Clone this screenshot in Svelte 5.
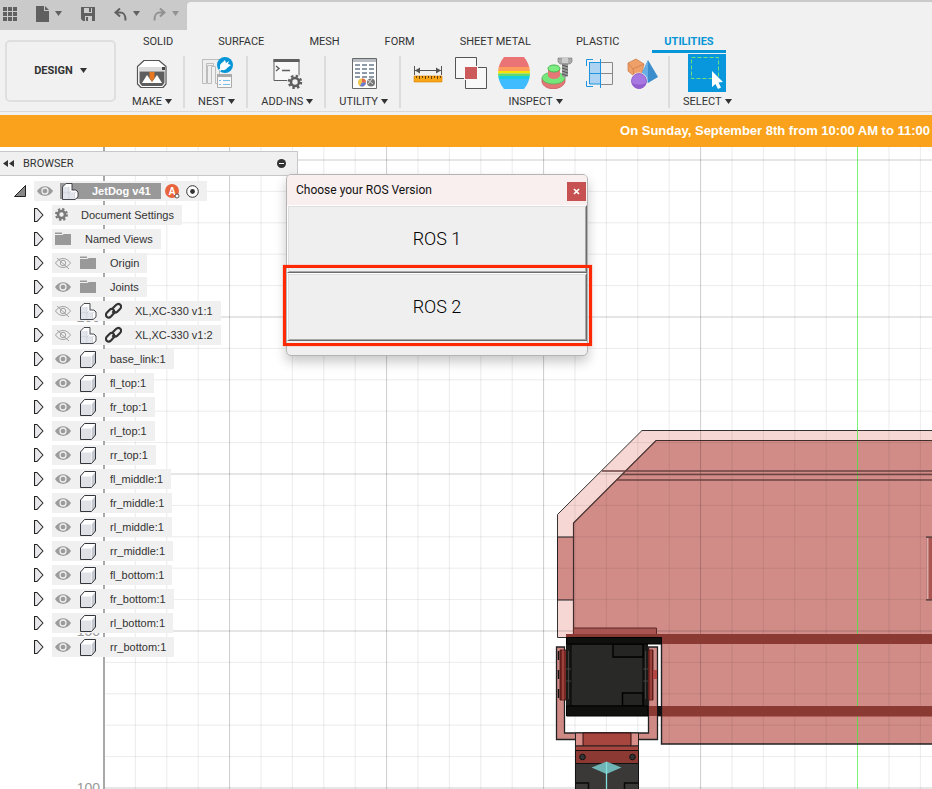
<script>
  const tabs = ['SOLID', 'SURFACE', 'MESH', 'FORM', 'SHEET METAL', 'PLASTIC', 'UTILITIES'];
  let activeTab = $state('UTILITIES');

  const groups = [
    { label: 'MAKE', icons: ['make'] },
    { label: 'NEST', icons: ['nest'] },
    { label: 'ADD-INS', icons: ['addins'] },
    { label: 'UTILITY', icons: ['utility'] },
    { label: 'INSPECT', icons: ['measure', 'interference', 'curvature', 'section', 'center', 'display'] },
    { label: 'SELECT', icons: ['select'] }
  ];

  const tree = [
    { name: 'Document Settings', icons: ['gear'] },
    { name: 'Named Views', icons: ['folder'] },
    { name: 'Origin', icons: ['hidden', 'folder'] },
    { name: 'Joints', icons: ['eye', 'folder'] },
    { name: 'XL,XC-330 v1:1', icons: ['hidden', 'component', 'link'] },
    { name: 'XL,XC-330 v1:2', icons: ['hidden', 'component', 'link'] },
    ...[
      'base_link', 'fl_top', 'fr_top', 'rl_top', 'rr_top',
      'fl_middle', 'fr_middle', 'rl_middle', 'rr_middle',
      'fl_bottom', 'fr_bottom', 'rl_bottom', 'rr_bottom'
    ].map((n) => ({ name: n + ':1', icons: ['eye', 'body'] }))
  ];

  // Every fifth line is a major one; column 23 is left to the green axis.
  const step = 31.4;
  const columns = Array.from({ length: 72 }, (_, i) => ({ i, x: 135.4 + i * step, major: i % 5 === 3 })).filter((c) => c.i !== 23);
  const rows = Array.from({ length: 60 }, (_, i) => ({ y: 13 + i * step, major: i % 5 === 0 }));
  const marks = [250, 200, 150, 100].map((value, i) => ({ value, y: 175 + i * 157 }));
</script>

{#snippet caret()}
  <svg class="caret" width="7" height="5" viewBox="0 0 7 5" aria-hidden="true"><path d="M0 0h7L3.5 5z" fill="currentColor" /></svg>
{/snippet}

{#snippet toolIcon(name)}
  {#if name === 'make'}
    <svg width="32" height="32" viewBox="0 0 32 32">
      <path d="M1.500 9.500 8 3.500h15l7 6V27l-3 3.500H5L1.500 27z" fill="#fff" stroke="#555" stroke-width="1.200" stroke-linejoin="round" />
      <path d="M3 10h26v4.500H3z" fill="#dadada" />
      <path d="M26 10h3v3h-3z" fill="#444" />
      <path d="M3.500 14.500h25V26l-2.500 3H6l-2.500-3z" fill="#5e5e5e" />
      <path d="M6 26 11 18l5 7 5-7 5 8z" fill="#fff" />
      <path d="M13.500 15h5v6L16 24.500 13.500 21z" fill="#e87722" />
    </svg>
  {:else if name === 'nest'}
    <svg width="32" height="32" viewBox="0 0 32 32">
      <path d="M1.500 26.500v-24h17v24h-4v-17h-4v17h-4v-18h6v-2h-7v20z" fill="#eee" stroke="#bdbdbd" />
      <circle cx="24" cy="8" r="8" fill="#0696d7" />
      <path d="m18.500 13.500 2-2" stroke="#fff" stroke-width="1.800" />
      <path d="M20 12.500c-2-3-1-6 2-7.500l4 6c-1 2-4 3-6 1.500zM22 5l2-2 1 3 3-2-1 3 3 1-4 3z" fill="#fff" />
      <path d="M16.500 17.500h14v13h-14z" fill="#f8f8f8" stroke="#aaa" />
      <path d="M16 17h15v3H16z" fill="#aaa" />
      <path d="M18 23.500h2m2 0h7M18 27.500h2m2 0h7" stroke="#7bbce4" />
    </svg>
  {:else if name === 'addins'}
    <svg width="32" height="32" viewBox="0 0 32 32">
      <path d="M3 2.500h25v21H3z" fill="#f8f8f8" stroke="#5e5e5e" />
      <path d="M2.500 2h26v3h-26z" fill="#5e5e5e" />
      <path d="m5 9 3 2.500-3 2.500M11 13.500h8" fill="none" stroke="#5e5e5e" stroke-width="1.4" />
      <circle cx="24" cy="25" r="8" fill="#f1f1f1" />
      <circle cx="24" cy="25" r="4" fill="none" stroke="#5e5e5e" stroke-width="2.600" />
      <circle cx="24" cy="25" r="6" fill="none" stroke="#5e5e5e" stroke-width="2.400" stroke-dasharray="2.400 2.312" />
    </svg>
  {:else if name === 'utility'}
    <svg width="32" height="32" viewBox="0 0 32 32">
      <path d="M4.500 1.500h24v30h-24z" fill="#fff" stroke="#6a6a6a" />
      <path d="M5 2h23v3H5z" fill="#b9bec5" />
      <path d="M7 8h5m2 0h5m2 0h5M7 12h5m2 0h5m2 0h5M7 16h5m2 0h5m2 0h5M7 20h5m2 0h5m2 0h5" stroke="#8e99aa" stroke-width="2" />
      <circle cx="14" cy="25.500" r="4" fill="#f1c84b" />
      <path d="M14 25.500v-4a4 4 0 0 1 4 4z" fill="#e5694f" />
      <path d="M14 25.500h4a4 4 0 0 1-6 3.400z" fill="#6a79d8" />
      <circle cx="23" cy="25.500" r="4" fill="#777" />
      <path d="m20 23 5 4m-5 0 4-5" stroke="#ddd" />
    </svg>
  {:else if name === 'measure'}
    <svg width="32" height="32" viewBox="0 0 32 32">
      <path d="M2.500 9v9M29.500 9v9M3 13.500h26" stroke="#555" />
      <path d="m3 13.500 5-3v6zm26 0-5-3v6z" fill="#555" />
      <path d="M2 19h28v6H2z" fill="#f9a51a" stroke="#d88400" stroke-width=".6" />
      <path d="M4.500 19v2m3-2v3m3-3v2m3-2v3m3-3v2m3-2v3m3-3v2m3-2v3m3-3v2" stroke="#684200" />
    </svg>
  {:else if name === 'interference'}
    <svg width="32" height="32" viewBox="0 0 32 32">
      <path d="M.5.500h21v21H.500zM10.500 10.500h21v21h-21z" fill="#f8f8f8" stroke="#555" />
      <path d="M9 9h14v14H9z" fill="#f8f8f8" />
      <path d="M10 10h12v12H10z" fill="#cd5a5a" />
    </svg>
  {:else if name === 'curvature'}
    <svg width="32" height="32" viewBox="0 0 32 32">
      <clipPath id="barrel"><path d="M6 0h20c8 10 8 22 0 32H6C-2 22-2 10 6 0z" /></clipPath>
      <g clip-path="url(#barrel)">
        <path d="M0 0h32v11H0z" fill="#ea7375" /><path d="M0 10h32v4H0z" fill="#ff9d5c" />
        <path d="M0 14h32v2.500H0z" fill="#f3e500" /><path d="M0 16.500h32v2.500H0z" fill="#63d96d" />
        <path d="M0 19h32v4H0z" fill="#15cee0" /><path d="M0 22h32v10H0z" fill="#3fbcff" />
      </g>
    </svg>
  {:else if name === 'section'}
    <svg width="32" height="32" viewBox="0 0 32 32">
      <path d="M1 21v4c2 9 20 9 23 0v-4z" fill="#e57777" stroke="#bd5050" stroke-width=".7" />
      <ellipse cx="12.500" cy="21" rx="11.500" ry="6" fill="#76e77b" stroke="#4cb852" stroke-width=".7" />
      <path d="M7 11v8c2 4 10 4 12 0v-8z" fill="#e57777" />
      <ellipse cx="13" cy="11.500" rx="6" ry="3.500" fill="#7dec82" stroke="#43b84b" />
      <path d="M21 5h6v13l-3 3-3-2z" fill="#989898" />
      <path d="m21 8 6 2m-6 1 6 2m-6 1 6 2m-6 1 6 2" stroke="#555" />
      <path d="M17 1h14v4l-2 2H19l-2-2z" fill="#aaa" stroke="#777" stroke-width=".6" /><path d="M21 1h6v5h-6z" fill="#ccc" />
    </svg>
  {:else if name === 'center'}
    <svg width="32" height="32" viewBox="0 0 32 32">
      <path d="M5 5h11v22H5z" fill="#acd3f1" />
      <path d="M16 5.500h12.500v22H16M16 16.500h12" fill="none" stroke="#888" />
      <path d="M16.500 2v29M5.500 5v22h11M5 5.500h11M5 16.500h12M9 2.500H2.500V9M2.500 24v5.500H9" fill="none" stroke="#1c94e0" />
    </svg>
  {:else if name === 'display'}
    <svg width="32" height="32" viewBox="0 0 32 32">
      <path d="m9 2 8 5-2 9-8 3-6-5V6z" fill="#ef9f68" stroke="#c9783f" stroke-width=".7" /><path d="m1 6 5 6 11-5M6 12l1 7" fill="none" stroke="#cf8050" stroke-width=".8" />
      <path d="m21 3 10 17-10 6-7-8z" fill="#3c8dcb" /><path d="m21 3-7 15 7 8z" fill="#66aee5" />
      <circle cx="12" cy="24" r="8.500" fill="#f1f1f1" /><circle cx="12" cy="24" r="7.500" fill="#a878e2" stroke="#8550bd" stroke-width=".8" />
      <path d="M5 26c4 2 10 2 14 0-1 7-12 8-14 0z" fill="#925dce" />
    </svg>
  {:else}
    <svg width="38" height="38" viewBox="0 0 38 38">
      <path d="M0 0h38v38H0z" fill="#0896dc" />
      <path d="M3.500 3.500h27v21h-27z" fill="none" stroke="#6fe07c" stroke-dasharray="4 2" />
      <path d="M24 17v16l3.500-3 2.500 5 3-1.500-2.500-5 4.500-.5z" fill="#fff" />
    </svg>
  {/if}
{/snippet}

{#snippet treeIcon(name)}
  {#if name === 'eye'}
    <svg width="17" height="16" viewBox="0 0 17 16"><path d="M0 8C4 1.500 12 1.500 16 8 12 14.500 4 14.500 0 8z" fill="#9b9b9b" /><circle cx="8" cy="8" r="3" fill="none" stroke="#eee" stroke-width="1.300" /></svg>
  {:else if name === 'hidden'}
    <svg width="17" height="16" viewBox="0 0 17 16" fill="none" stroke="#999" stroke-width=".9"><path d="M.5 8c4-6 11-6 15 0-4 6-11 6-15 0z" /><circle cx="8" cy="8" r="2.700" /><path d="m2 3 12 11" /></svg>
  {:else if name === 'gear'}
    <svg width="13" height="16" viewBox="0 0 13 16"><circle cx="6.500" cy="7.500" r="3.500" fill="none" stroke="#7a7a7a" stroke-width="2.600" /><circle cx="6.500" cy="7.500" r="5.500" fill="none" stroke="#7a7a7a" stroke-width="2" stroke-dasharray="2.300 2.020" /></svg>
  {:else if name === 'folder'}
    <svg width="17" height="16" viewBox="0 0 17 16"><path d="M0 1.500h7v1.500H0zM0 4h7l2-1h7v11H0z" fill="#999" /></svg>
  {:else if name === 'component'}
    <svg width="17" height="17" viewBox="0 0 17 17" stroke-linejoin="round"><path d="M.5 4 4 .5h6V7h4l2 2v5l-3 2.500H.500z" fill="#fff" /><path d="M1 4h6v6H1zM1 10.500h6V16H1zM7.500 10.500H12V16H7.500z" fill="#e3e5ec" /><path d="M7 4v12M7 10l3-3M12.500 10v6M1 10h11.500L15 8.500" fill="none" stroke="#c3c6ce" stroke-width=".7" /><path d="M.5 4 4 .5h6V7h4l2 2v5l-3 2.500H.500z" fill="none" stroke="#33353c" stroke-width=".9" /></svg>
  {:else if name === 'body'}
    <svg width="17" height="17" viewBox="0 0 17 17"><path d="M.5 5 4.500.500h11v11.500l-4 4.500H.500z" fill="#fff" /><path d="M1 5.500h10.500V16H1z" fill="#dfe1e7" /><path d="M12 5v11l3.500-4V1z" fill="#c5c7cf" /><path d="M.5 5 4.500.500h11v11.500l-4 4.500H.500z" fill="none" stroke="#33353c" stroke-linejoin="round" /></svg>
  {:else}
    <svg width="17" height="18" viewBox="0 0 17 18" fill="none" stroke="#333" stroke-width="2.200" stroke-linecap="round"><path d="m7 7 4-4c3-3 7 1 4 4l-3 3c-1 1-3 1-4 0M10 10l-4 4.500c-3 3-7-1-4-4l3-3c1-1 3-1 4 1" /></svg>
  {/if}
{/snippet}

<div class="app">
  <header>
    <div class="quick">
      <div class="quick-tools">
        <button aria-label="Data panel"><svg width="14" height="14" viewBox="0 0 14 14"><path d="M0 0h4v4H0zm5 0h4v4H5zm5 0h4v4h-4zM0 5h4v4H0zm5 0h4v4H5zm5 0h4v4h-4zM0 10h4v4H0zm5 0h4v4H5zm5 0h4v4h-4z" fill="currentColor" /></svg></button>
        <button class="new" aria-label="New file"><svg width="13" height="16" viewBox="0 0 13 16"><path d="M0 0h8v5h5v11H0zM9 0l4 4H9z" fill="currentColor" /></svg>{@render caret()}</button>
        <button class="save" aria-label="Save"><svg width="14" height="14" viewBox="0 0 14 14"><path d="M0 0h14v14H2l-2-2z" fill="currentColor" /><path d="M3 1h8v5H3zM4 9h7v5H4z" fill="#ccc" /><path d="M8 1h2v4H8zM5 10h2v4H5z" fill="currentColor" /></svg></button>
        <button class="undo" aria-label="Undo"><svg width="13" height="13" viewBox="0 0 13 13" fill="none" stroke="currentColor" stroke-width="2"><path d="M6 .5 1.500 4.500 6 8.500M2 4.500h4c4 0 5.500 2 5.500 8" /></svg>{@render caret()}</button>
        <button class="redo" aria-label="Redo"><svg width="13" height="13" viewBox="0 0 13 13" fill="none" stroke="currentColor" stroke-width="2"><path d="m7 .5 4.500 4L7 8.500M11 4.500H7c-4 0-5.500 2-5.500 8" /></svg>{@render caret()}</button>
      </div>
      <div class="doc-tab"></div>
    </div>
    <div class="ribbon">
      <button class="workspace">DESIGN {@render caret()}</button>
      <div class="panels">
        <nav class="tabs">
          {#each tabs as tab}
            <button class:active={tab === activeTab} onclick={() => (activeTab = tab)}>{tab}</button>
          {/each}
        </nav>
        <div class="groups">
          {#each groups as group}
            <section class="group">
              <div class="tools">
                {#each group.icons as name}
                  <button aria-label={name}>{@render toolIcon(name)}</button>
                {/each}
              </div>
              <button class="group-label">{group.label}{@render caret()}</button>
            </section>
          {/each}
        </div>
      </div>
    </div>
  </header>

  <div class="banner">On Sunday, September 8th from 10:00 AM to 11:00</div>

  <main>
    <svg class="canvas" width="100%" height="100%" aria-hidden="true">
      <g class="model" transform="translate(0 -147)">
        <path d="M2400 430.500H642L557.500 514.500v123h16V634H2400z" fill="#f6d7d4" stroke="#333" />
        <path d="M2400 440.500H656L573.500 523v111H2400z" fill="#d18c88" />
        <path d="M661.500 640H2400v104H661.500z" fill="#d18c88" />
        <path d="M557.500 537h16v63h-16z" fill="#d18c88" stroke="#222" />
      </g>
      <g class="grid">
        {#each columns as c}
          <line x1={c.x} x2={c.x} y1="0" y2="100%" class:major={c.major} />
        {/each}
        {#each rows as r}
          <line x1="104" x2="100%" y1={r.y} y2={r.y} class:major={r.major} />
        {/each}
      </g>
      <line x1="104" x2="104" y1="0" y2="100%" stroke="#a8a8a8" stroke-width="2" />
      <rect class="axis" x="857" y="0" width="1" height="100%" />
      {#each marks as m}
        <text x="100" y={m.y} text-anchor="end">{m.value}</text>
      {/each}
      <g transform="translate(0 -147)">
        <path d="M2400 440.500H656L573.500 523v111" fill="none" stroke="#3f2c2b" stroke-width="1.200" />
        <path d="M602 471h1798M622 474.500h1778M616 480h1784" stroke="#6b4341" stroke-width="1.300" />
        <path d="M926 537h14v63h-14z" fill="#ab5551" /><path d="M926 537h14M926 600h14" stroke="#333" /><path d="M927.500 538v61" stroke="#d9aaa7" stroke-width="2" />
        <path d="M573.500 634v-6h83v6" fill="#a85450" stroke="#5d2825" />
        <path d="M566 634H2400v10H566z" fill="#8b3933" />
        <path d="M648 706H2400v10.500H648z" fill="#8b3933" />
        <path d="M649 645h12.500v60H649z" fill="#fff" />
        <path d="M661.500 644v100H2400" fill="none" stroke="#222" stroke-width="1.400" />
        <path d="M556.500 647h8v86h84v-86h9v92.500h-101z" fill="#cf8a86" stroke="#222" stroke-width="1.300" />
        <path d="M649 706h8v10h-8z" fill="#8b3933" /><path d="M657 706h5v10h-5z" fill="#111" />
        <path d="M560 650h7v50h-7zM648 650h5v50h-5z" fill="#792722" stroke="#3b100e" stroke-width=".8" />
        <path d="M563 650v50M651 650v50" stroke="#cb6964" stroke-width=".8" />
        <path d="M653 670h4v9h-4z" fill="#b44540" />
        <path d="M558.500 651v9m0 10v9m0 10v9" stroke="#111" stroke-width="1.500" />
        <path d="M566 644h82v62h-82z" fill="#1a1a19" />
        <path d="M571 644h72v62h-72z" fill="#292a27" stroke="#050505" />
        <path d="M613 644h30v13h-30zM622.500 693H643v13h-20.500z" fill="#252624" stroke="#000" stroke-width="1.400" />
        <path d="M568.500 651v48M645.500 651v48M566 669h5m-5 12h5m72-12h5m-5 12h5" stroke="#545450" stroke-width=".7" />
        <path d="M566.500 637.500h95v6.500h-95zM566.500 706H648v10h-81.500z" fill="#10100f" stroke="#000" />
        <path d="M575.500 733h63v13h-63z" fill="#d98e8a" stroke="#222" />
        <path d="M583 733h48v13h-48z" fill="#a7453f" stroke="#30100e" />
        <path d="M575.500 746h63v4.500h-63z" fill="#a8453f" stroke="#222" />
        <path d="M575.500 750.500h63v13h-63z" fill="#8c3833" stroke="#111" />
        <circle cx="582.500" cy="757" r="2.800" fill="#333" stroke="#111" /><circle cx="632.500" cy="757" r="2.800" fill="#333" stroke="#111" />
        <path d="M575.500 763.500h63V880h-63z" fill="#3a3937" stroke="#111" />
        <path d="M576 783h12.500v97M638 783h-13.500v97" fill="none" stroke="#080808" stroke-width="1.500" />
        <path d="m591.500 767.500 15-6 15 6-15 6.500z" fill="#6fb5b5" /><path d="M606.500 762v118" stroke="#86dede" stroke-width="1.300" />
      </g>
    </svg>

    <aside class="browser">
      <div class="browser-head">
        <svg width="11" height="7" viewBox="0 0 11 7"><path d="M5 0v7L0 3.500zM11 0v7L6 3.500z" fill="#333" /></svg>
        <span>BROWSER</span>
        <button aria-label="Collapse browser"><svg width="9" height="9" viewBox="0 0 9 9"><circle cx="4.500" cy="4.500" r="4.500" fill="#333" /><path d="M2 4.500h5" stroke="#fff" /></svg></button>
      </div>
      <ul>
        <li class="root">
          <svg width="12" height="12" viewBox="0 0 12 12"><path d="M11.500.500v11H.500z" fill="#888" stroke="#222" /></svg>
          <div class="item">
            {@render treeIcon('eye')}
            <span class="selected">{@render treeIcon('component')}<b>JetDog v41</b></span>
            <svg class="badge" width="15" height="15" viewBox="0 0 15 15"><circle cx="7" cy="7" r="7" fill="#e8643c" /><text x="7" y="11" text-anchor="middle">A</text><circle cx="12" cy="12" r="2" fill="#fff" stroke="#333" stroke-width=".8" /></svg>
            <svg width="13" height="13" viewBox="0 0 13 13"><circle cx="6.500" cy="6.500" r="5.800" fill="#fff" stroke="#333" /><circle cx="6.500" cy="6.500" r="2.400" fill="#333" /></svg>
          </div>
        </li>
        {#each tree as node}
          <li>
            <svg width="10" height="14" viewBox="0 0 10 14"><path d="M.5.500H3L9 7l-6 6.500H.500z" fill="#e8e8ec" stroke="#222" stroke-width="1.100" stroke-linejoin="round" /></svg>
            <div class="item">
              {#each node.icons as name}{@render treeIcon(name)}{/each}
              <span class="name">{node.name}</span>
            </div>
          </li>
        {/each}
      </ul>
    </aside>

    <div class="dialog" role="dialog" aria-labelledby="dialog-title">
      <div class="dialog-head">
        <span id="dialog-title">Choose your ROS Version</span>
        <button class="close" aria-label="Close"><svg width="7" height="7" viewBox="0 0 7 7"><path d="m1 1 5 5M6 1 1 6" stroke="#fff" stroke-width="1.700" /></svg></button>
      </div>
      <button class="choice">ROS 1</button>
      <div class="marked"><button class="choice">ROS 2</button></div>
    </div>
  </main>
</div>

<style>
  :global(body) { margin: 0; }
  .app {
    display: flex;
    flex-direction: column;
    min-height: 100vh;
    overflow: hidden;
    background: #fff;
    color: #333;
    font: 11px/14px Roboto, "Liberation Sans", sans-serif;
  }
  button {
    display: flex;
    align-items: center;
    margin: 0;
    padding: 0;
    border: 0;
    background: none;
    color: inherit;
    font: inherit;
    white-space: nowrap;
  }
  svg { display: block; flex: none; }

  header { background: #f1f1f1; padding-bottom: 3px; }
  .quick { display: flex; height: 30px; background: #cacaca; }
  .quick-tools { display: flex; align-items: center; width: 184px; padding: 0 0 2px 3px; color: #606060; }
  .quick-tools button { gap: 6px; }
  .quick-tools .new, .quick-tools .save, .quick-tools .undo { margin-left: 19px; }
  .quick-tools .redo { margin-left: 13px; color: #929292; }
  .doc-tab { flex: 1; margin-top: 2px; border-radius: 4px 0 0 0; background: #f1f1f1; }

  .ribbon { display: flex; border-bottom: 1px solid #dadada; padding-left: 5px; height: 81px; }
  .workspace {
    justify-content: center;
    gap: 7px;
    width: 111px;
    height: 62px;
    margin-top: 10px;
    border: 2px solid #dfdfdf;
    border-radius: 5px;
    font-weight: 700;
    box-sizing: border-box;
    flex: none;
  }
  .panels { display: flex; flex-direction: column; }
  .tabs { display: flex; gap: 21px; padding-left: 15px; }
  .tabs button { height: 23px; padding: 3px 12px 0; border-bottom: 3px solid transparent; box-sizing: border-box; }
  .tabs .active { border-color: #0696d7; color: #0696d7; font-weight: 700; }
  .groups { display: flex; padding-left: 3px; }
  .group { display: flex; flex-direction: column; align-items: center; padding: 0 13px; position: relative; }
  .group:not(:last-child)::after { content: ""; position: absolute; right: 0; top: 3px; width: 2px; height: 52px; background: #dcdcdc; }
  .tools { display: flex; align-items: center; gap: 11px; height: 40px; margin: 0 -2px; }
  .group-label { gap: 3px; height: 18px; }
  .caret { margin-top: -1px; }

  .banner {
    height: 32px;
    padding-right: 2px;
    background: #faa21b;
    color: #fff;
    font: 700 13px/32px "Liberation Sans", Arial, sans-serif;
    text-align: right;
    white-space: nowrap;
  }

  main { position: relative; flex: 1; padding-top: 4px; }
  .canvas { position: absolute; inset: 0; }
  .grid line { stroke: #000; stroke-opacity: .08; stroke-width: 1; }
  .grid .major { stroke-opacity: .2; }
  .axis { fill: #3ff03a; fill-opacity: .7; }
  .canvas text { fill: #999; font: 14px "Liberation Sans", Arial, sans-serif; }

  .browser { position: relative; width: 298px; }
  .browser-head { display: flex; align-items: center; gap: 9px; height: 23px; padding: 0 11px 0 3px; background: #f0f0f0; border: 1px solid #c8c8c8; border-left: 0; }
  .browser-head button { margin-left: auto; }
  ul { display: flex; flex-direction: column; gap: 4px; margin: 0; padding: 5px 0 0; list-style: none; font: 11px/20px "Liberation Sans", Arial, sans-serif; }
  li { display: flex; align-items: center; gap: 8px; padding-left: 34px; }
  .item { display: flex; align-items: center; gap: 8px; height: 20px; padding: 0 8px 0 3px; background: #f0f0f0; }
  .name { padding-left: 5px; white-space: nowrap; }
  .root { padding-left: 14px; }
  .root .item { gap: 6px; }
  .selected { display: flex; align-items: center; gap: 13px; height: 16px; padding: 0 10px 0 2px; background: #999; color: #fff; white-space: nowrap; }
  .badge { margin-left: -2px; }
  .badge text { fill: #fff; font: 700 10px "Liberation Sans", Arial, sans-serif; }

  .dialog {
    position: absolute;
    left: 286px;
    top: 27px;
    width: 300px;
    padding-bottom: 14px;
    border: 1px solid #b4b4b4;
    border-radius: 5px;
    background: #f0f0f0;
    box-shadow: 0 6px 12px rgba(0, 0, 0, .22);
  }
  .dialog-head { display: flex; align-items: center; justify-content: space-between; height: 30px; padding: 0 0 0 9px; border-radius: 4px 4px 0 0; background: #f9efee; color: #111; font: 12px/30px Roboto, "Noto Sans", sans-serif; }
  .close { justify-content: center; width: 19px; height: 19px; margin: 2px 1px 0 0; background: #c75050; }
  .choice {
    justify-content: center;
    width: 100%;
    height: 68px;
    border: 1px solid;
    border-color: #fff #6b6b6b #6b6b6b #fff;
    box-shadow: inset 1px 1px #dedede, inset -1px -1px #a8a8a8;
    background: #efefef;
    color: #000;
    font: 300 18px/24px Roboto, "Liberation Sans", sans-serif;
  }
  .marked { position: relative; }
  .marked::after { content: ""; position: absolute; inset: -8px -5px -5px -4px; border: 3px solid #ff2a05; box-shadow: 0 0 1px #ff6a50; pointer-events: none; }
</style>
